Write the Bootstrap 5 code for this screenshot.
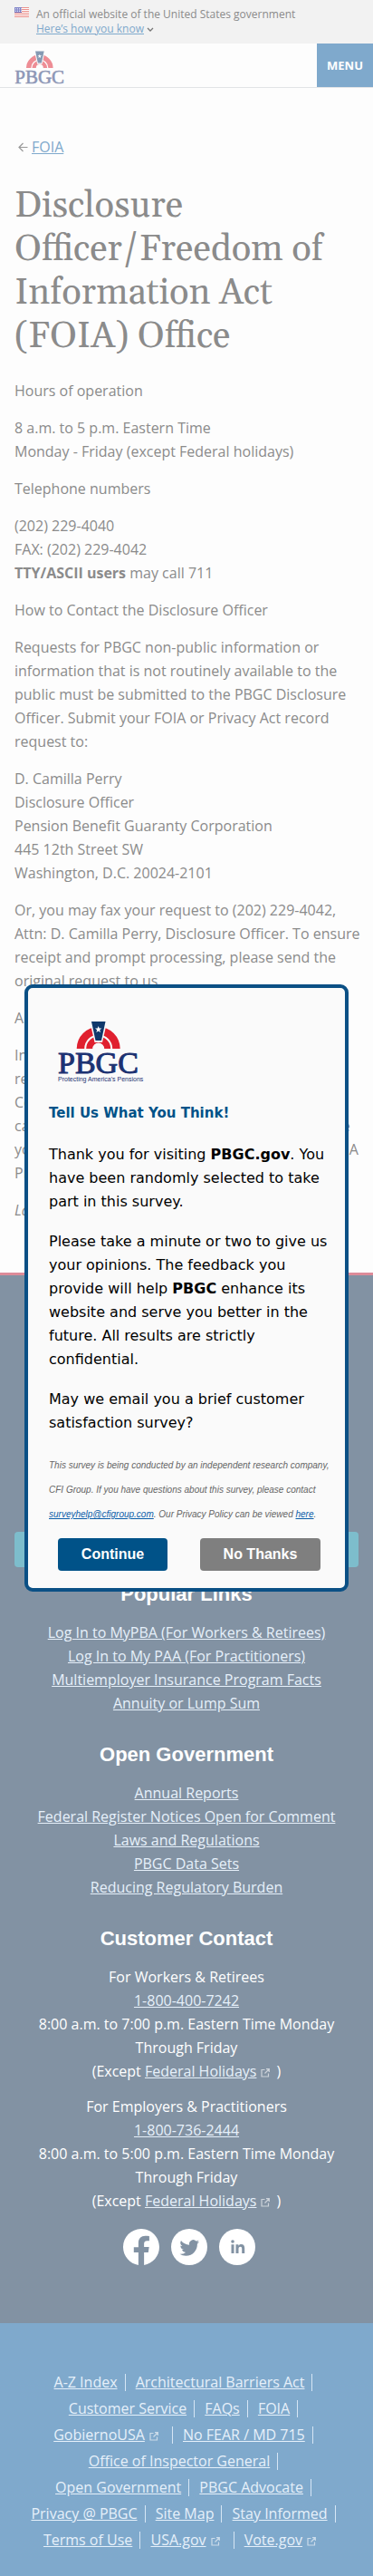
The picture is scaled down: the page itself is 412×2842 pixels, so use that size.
<!DOCTYPE html>
<html lang="en">
<head>
<meta charset="utf-8">
<meta name="viewport" content="width=device-width, initial-scale=1">
<title>Disclosure Officer/Freedom of Information Act (FOIA) Office | PBGC</title>
<link rel="stylesheet" href="https://cdn.jsdelivr.net/npm/bootstrap@5.3.0/dist/css/bootstrap.min.css">
<style>
  :root { --muted: #8b8b8b; --sky: #7fa9cc; --slate: #8292a3; --navy: #005288; }
  body { font: 16px/26px "Open Sans", sans-serif; color: var(--muted); background: #fdfdfd; }
  a { color: inherit; }
  p { margin-bottom: 15px; }

  .gov-banner { background: #f2f2f2; font-size: 12px; line-height: 16px; padding: 8px 16px; min-height: 48px; }
  .gov-banner .btn { font: inherit; color: #7fa9cc; line-height: 16px; }
  .site-head { height: 49px; border-bottom: 1px solid #e2e4e6; }
  .site-head .brand { opacity: .5; margin: 8px 0 0 16px; line-height: 0; }
  .menu-btn { background: var(--sky); color: #fff; font-size: 13px; font-weight: 700; border: 0; width: 62px; }

  .page { padding: 52px 8px 56px 16px; }
  .crumb { margin-bottom: 29px; }
  .crumb a { color: #7fa9cc; }
  .page h1 { font: 400 40px/48px Gelasio, Georgia, serif; margin-bottom: 22px; }
  .page p { margin-bottom: 15px; }
  .page p:last-child { margin-bottom: 0; }

  .foot-main { background: var(--slate); border-top: 3px solid #dd8b99; color: #fff; padding: 283px 16px 64px; text-align: center; }
  .foot-main a, .foot-legal a { color: #e6f0fa; }
  .foot-main h2 { font: 700 22px/30px "Liberation Sans", sans-serif; margin: 29px 0 14px; }
  .subscribe-btn { height: 39px; background: #7dbdcc; color: #fff; border: 0; border-radius: 4px; }
  .foot-main .subscribe-btn + h2 { margin-top: 15px; }
  .foot-main p { margin-bottom: 13px; }
  .social { gap: 13px; margin-top: 18px; padding-left: 6px; }
  .social a { line-height: 0; color: #fff; }
  .ext { margin: 0 3px 0 5px; opacity: .6; }

  .foot-legal { background: var(--sky); padding: 51px 32px 25px; text-align: center; line-height: 29px; }
  .foot-legal li { display: inline-block; margin-right: 7px; }
  .foot-legal li span { display: inline-block; line-height: 19px; padding-right: 8px; border-right: 1px solid #d6e6f5; }
  .foot-legal .ext { margin-right: 7px; }
  .foot-legal li:last-child { margin-right: 0; }
  .foot-legal li:last-child span { border: 0; }

  .survey-layer { padding: 0 27px; pointer-events: none; z-index: 1050; }
  .survey { pointer-events: auto; max-width: 358px; background: #fafafa; border: 4px solid #0b5085; border-radius: 9px; padding: 36px 14px 19px 23px; color: #000; font-family: "DejaVu Sans", Verdana, sans-serif; }
  .survey h2 { font: 700 15px/26px "DejaVu Sans", Verdana, sans-serif; color: var(--navy); margin: 19px 0 20px; }
  .survey p { margin-bottom: 18px; }
  .survey .fineprint { font: italic 10px/27px "Liberation Sans", Arial, sans-serif; color: #666; margin: 20px 0 13px; }
  .survey .fineprint a { color: #0b5da8; }
  .survey-actions { gap: 36px; margin-left: 10px; }
  .survey-actions .btn { font: 700 16px/24px "Liberation Sans", Arial, sans-serif; height: 36px; color: #fff; border: 0; border-radius: 4px; padding: 6px 0; }
  .go, .go:hover { background: var(--navy); width: 121px; }
  .decline, .decline:hover { background: #7f7f7f; width: 133px; }
  .survey .emblem { margin-left: 10px; overflow: visible; }
</style>
</head>
<body>
<svg class="d-none" xmlns="http://www.w3.org/2000/svg">
  <symbol id="arch" viewBox="0 0 90 60">
    <path d="M20.700 31a24 24 0 0 1 48 0h-8.500a15.500 15.500 0 0 0-31 0z" fill="#e0202f"/>
    <path d="M31.200 31a13.500 13.500 0 0 1 27 0h-7a6.500 6.500 0 0 0-13 0z" fill="#e0202f"/>
    <path d="M35 0h19.500L49 24h-8.500z" fill="#fafafa"/>
    <path d="M37 1h15.500L48 22h-6.500z" fill="#10386b"/>
    <path d="M44.700 6l1 2.600h2.700l-2.200 1.700.8 2.700-2.300-1.600-2.300 1.600.8-2.700-2.200-1.700h2.700z" fill="#fff"/>
    <text x="0" y="58" font-family="Liberation Serif" font-size="34" stroke-width="1" stroke="#1c3272" fill="#1c3272">PBGC</text>
  </symbol>
  <symbol id="out" viewBox="0 0 10 10"><path d="M4.500 1.500H1v7.500h7.500V5.500M6 .7h3.300V4M9 1L4.500 5.500" fill="none" stroke="#fff" stroke-width="1.200"/></symbol>
</svg>

<section class="gov-banner d-flex" aria-label="Official government website">
  <svg class="flex-shrink-0 me-2" width="16" height="11" viewBox="0 0 16 11" aria-hidden="true">
    <path fill="#fff" d="M0 0h16v11H0z"/>
    <path d="M0 .5h16M0 2.500h16M0 4.500h16M0 6.500h16M0 8.500h16M0 10.500h16" stroke="#ea8f8a"/>
    <path fill="#8084c8" d="M0 0h8v6H0z"/>
    <path d="M1 1.500h7M1 3h7M1 4.500h7" stroke="#fff" stroke-width=".7" stroke-dasharray="1 1"/>
  </svg>
  <div>
    <div>An official website of the United States government</div>
    <button type="button" class="btn p-0 border-0 d-block text-decoration-none"><u>Here’s how you know</u>
      <svg width="8" height="6" viewBox="0 0 8 6" fill="none" stroke="#777" stroke-width="1.300"><path d="M1 1l3 3 3-3"/></svg></button>
  </div>
</section>

<header class="site-head d-flex justify-content-between">
  <a class="brand" href="#" aria-label="PBGC home"><svg width="56" height="37" viewBox="0 0 90 60"><use href="#arch" width="90" height="60"/></svg></a>
  <button type="button" class="menu-btn">MENU</button>
</header>

<main class="page">
  <nav class="crumb d-flex align-items-center" aria-label="Breadcrumb">
    <svg class="mx-1" width="11" height="11" viewBox="0 0 11 11" fill="none" stroke="#999" stroke-width="1.200"><path d="M10.500 5.500H1M5.500 1L1 5.500 5.500 10"/></svg>
    <a href="#">FOIA</a>
  </nav>
  <h1>Disclosure Officer/Freedom of Information Act (FOIA) Office</h1>
  <p>Hours of operation</p>
  <p>8 a.m. to 5 p.m. Eastern Time<br>Monday - Friday (except Federal holidays)</p>
  <p>Telephone numbers</p>
  <p>(202) 229-4040<br>FAX: (202) 229-4042<br><strong>TTY/ASCII users</strong> may call 711</p>
  <p>How to Contact the Disclosure Officer</p>
  <p>Requests for PBGC non-public information or information that is not routinely available to the public must be submitted to the PBGC Disclosure Officer. Submit your FOIA or Privacy Act record request to:</p>
  <p>D. Camilla Perry<br>Disclosure Officer<br>Pension Benefit Guaranty Corporation<br>445 12th Street SW<br>Washington, D.C. 20024-2101</p>
  <p>Or, you may fax your request to (202) 229-4042, Attn: D. Camilla Perry, Disclosure Officer. To ensure receipt and prompt processing, please send the original request to us.</p>
  <p>Also available by email.</p>
  <p>In the subject line, please name the<br>records you are asking for.<br>Contact the Disclosure Officer, who<br>can explain the request process and may help the<br>you with any help on how to submit your own FOIA<br>Privacy Act request.</p>
  <p><em>Last Updated:</em></p>
</main>

<footer>
  <div class="foot-main">
    <button type="button" class="subscribe-btn d-block w-100" aria-label="Subscribe"></button>
    <h2>Popular Links</h2>
    <ul class="list-unstyled mb-0">
      <li><a href="#">Log In to MyPBA (For Workers &amp; Retirees)</a></li>
      <li><a href="#">Log In to My PAA (For Practitioners)</a></li>
      <li><a href="#">Multiemployer Insurance Program Facts</a></li>
      <li><a href="#">Annuity or Lump Sum</a></li>
    </ul>
    <h2>Open Government</h2>
    <ul class="list-unstyled mb-0">
      <li><a href="#">Annual Reports</a></li>
      <li><a href="#">Federal Register Notices Open for Comment</a></li>
      <li><a href="#">Laws and Regulations</a></li>
      <li><a href="#">PBGC Data Sets</a></li>
      <li><a href="#">Reducing Regulatory Burden</a></li>
    </ul>
    <h2>Customer Contact</h2>
    <p>For Workers &amp; Retirees<br><a href="#">1-800-400-7242</a><br>8:00 a.m. to 7:00 p.m. Eastern Time Monday<br>Through Friday<br>(Except <a href="#">Federal Holidays</a><svg class="ext" width="10" height="10"><use href="#out"/></svg> )</p>
    <p>For Employers &amp; Practitioners<br><a href="#">1-800-736-2444</a><br>8:00 a.m. to 5:00 p.m. Eastern Time Monday<br>Through Friday<br>(Except <a href="#">Federal Holidays</a><svg class="ext" width="10" height="10"><use href="#out"/></svg> )</p>
    <div class="social d-flex justify-content-center">
      <a href="#" aria-label="Facebook"><svg width="40" height="40" viewBox="0 0 16 16" fill="currentColor"><path d="M16 8.049c0-4.446-3.582-8.050-8-8.050C3.580 0-.002 3.603-.002 8.050c0 4.017 2.926 7.347 6.750 7.951v-5.625h-2.030V8.050H6.750V6.275c0-2.017 1.195-3.131 3.022-3.131.876 0 1.791.157 1.791.157v1.980h-1.009c-.993 0-1.303.621-1.303 1.258v1.510h2.218l-.354 2.326H9.250V16c3.824-.604 6.750-3.934 6.750-7.951z"/></svg></a>
      <a href="#" aria-label="Twitter"><svg width="40" height="40" viewBox="0 0 40 40"><circle cx="20" cy="20" r="20" fill="currentColor"/><path transform="translate(9.500 9.500) scale(1.350)" fill="#8292a3" d="M5.026 15c6.038 0 9.341-5.003 9.341-9.334 0-.14 0-.282-.006-.422A6.685 6.685 0 0 0 16 3.542a6.658 6.658 0 0 1-1.889.518 3.301 3.301 0 0 0 1.447-1.817 6.533 6.533 0 0 1-2.087.793A3.286 3.286 0 0 0 7.875 6.030a9.325 9.325 0 0 1-6.767-3.429 3.289 3.289 0 0 0 1.018 4.382A3.323 3.323 0 0 1 .64 6.575v.045a3.288 3.288 0 0 0 2.632 3.218 3.203 3.203 0 0 1-.865.115 3.230 3.230 0 0 1-.614-.057 3.283 3.283 0 0 0 3.067 2.277A6.588 6.588 0 0 1 .78 13.580a6.320 6.320 0 0 1-.78-.045A9.344 9.344 0 0 0 5.026 15z"/></svg></a>
      <a href="#" aria-label="LinkedIn"><svg width="40" height="40" viewBox="0 0 40 40"><circle cx="20" cy="20" r="20" fill="currentColor"/><g fill="#8292a3"><circle cx="15" cy="14" r="1.800"/><path d="M13.500 17.300h3V27h-3zM18.500 17.300h2.900v1.400c.6-1 1.700-1.600 3-1.600 2.900 0 3.800 1.800 3.800 4.500V27h-3v-4.800c0-1.300-.2-2.500-1.700-2.500s-2 1.100-2 2.500V27h-3z"/></g></svg></a>
    </div>
  </div>
  <nav class="foot-legal" aria-label="Site policies">
    <ul class="list-unstyled mb-0">
      <li><span><a href="#">A-Z Index</a></span></li>
      <li><span><a href="#">Architectural Barriers Act</a></span></li>
      <li><span><a href="#">Customer Service</a></span></li>
      <li><span><a href="#">FAQs</a></span></li>
      <li><span><a href="#">FOIA</a></span></li>
      <li><span><a href="#">GobiernoUSA</a><svg class="ext" width="10" height="10"><use href="#out"/></svg></span></li>
      <li><span><a href="#">No FEAR / MD 715</a></span></li>
      <li><span><a href="#">Office of Inspector General</a></span></li>
      <li><span><a href="#">Open Government</a></span></li>
      <li><span><a href="#">PBGC Advocate</a></span></li>
      <li><span><a href="#">Privacy @ PBGC</a></span></li>
      <li><span><a href="#">Site Map</a></span></li>
      <li><span><a href="#">Stay Informed</a></span></li>
      <li><span><a href="#">Terms of Use</a></span></li>
      <li><span><a href="#">USA.gov</a><svg class="ext" width="10" height="10"><use href="#out"/></svg></span></li>
      <li><span><a href="#">Vote.gov</a><svg class="ext" width="10" height="10"><use href="#out"/></svg></span></li>
    </ul>
  </nav>
</footer>

<div class="survey-layer position-fixed top-0 start-0 w-100 h-100 d-flex align-items-center justify-content-center">
  <div class="survey w-100" role="dialog" aria-labelledby="survey-title">
    <svg class="emblem d-block" width="90" height="70" viewBox="0 0 90 70" role="img" aria-label="PBGC">
      <use href="#arch" width="90" height="60"/>
      <text x="0" y="67" font-family="Liberation Sans" font-size="7" fill="#1c3272">Protecting America's Pensions</text>
    </svg>
    <h2 id="survey-title">Tell Us What You Think!</h2>
    <p>Thank you for visiting <strong>PBGC.gov</strong>. You have been randomly selected to take part in this survey.</p>
    <p>Please take a minute or two to give us your opinions. The feedback you provide will help <strong>PBGC</strong> enhance its website and serve you better in the future. All results are strictly confidential.</p>
    <p>May we email you a brief customer satisfaction survey?</p>
    <div class="fineprint">This survey is being conducted by an independent research company, CFI Group. If you have questions about this survey, please contact <a href="#">surveyhelp@cfigroup.com</a>. Our Privacy Policy can be viewed <a href="#">here</a>.</div>
    <div class="survey-actions d-flex">
      <button type="button" class="btn go">Continue</button>
      <button type="button" class="btn decline">No Thanks</button>
    </div>
  </div>
</div>
<script src="https://cdn.jsdelivr.net/npm/bootstrap@5.3.0/dist/js/bootstrap.bundle.min.js"></script>
</body>
</html>
